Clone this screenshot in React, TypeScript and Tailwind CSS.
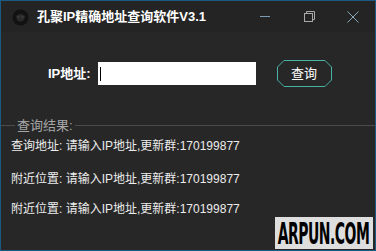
import React from "react";

const cjk = { fontFamily: '"Liberation Sans", "Noto Sans CJK SC", sans-serif' };

function AppIcon() {
  return (
    <svg width="17" height="17" viewBox="0 0 17 17">
      <circle cx="8.5" cy="8.5" r="8" fill="#121212" />
      <path d="M4 7 Q8.5 3 13 7 L12 11 Q8.5 14 5 11 Z" fill="#2a2a2a" />
      <circle cx="6.5" cy="8" r="1.2" fill="#3a3a3a" />
      <circle cx="10.5" cy="8" r="1.2" fill="#3a3a3a" />
    </svg>
  );
}

function QueryButton() {
  return (
    <button className="relative w-[55px] h-[27px] flex items-center justify-center text-[13px] text-white">
      <svg className="absolute inset-0" width="55" height="27" viewBox="0 0 55 27">
        <polygon
          points="7,0.5 48,0.5 54.5,7 54.5,20 48,26.5 7,26.5 0.5,20 0.5,7"
          fill="none"
          stroke="#49b3a5"
          strokeWidth="1"
        />
      </svg>
      <span className="relative">查询</span>
    </button>
  );
}

export default function App() {
  const lines = [
    "查询地址: 请输入IP地址,更新群:170199877",
    "附近位置: 请输入IP地址,更新群:170199877",
    "附近位置: 请输入IP地址,更新群:170199877",
  ];

  return (
    <div
      className="relative w-[376px] h-[251px] border border-[#1b5a82] bg-[#272727] flex flex-col overflow-hidden"
      style={cjk}
    >
      {/* title bar */}
      <div className="h-[31px] flex items-center bg-[#242424]">
        <div className="ml-[11px] mt-[1px]">
          <AppIcon />
        </div>
        <span className="ml-[8px] text-[13px] font-bold text-white">孔聚IP精确地址查询软件V3.1</span>
        <div className="ml-auto flex h-full">
          <div className="w-[44px] flex items-center justify-center">
            <div className="w-[10px] h-[1px] bg-[#7d9cb4]" />
          </div>
          <div className="w-[44px] flex items-center justify-center">
            <svg width="11" height="11" viewBox="0 0 11 11">
              <rect x="0.5" y="2.5" width="8" height="8" fill="none" stroke="#a9a9a9" />
              <path d="M2.5 2.5 V0.5 H10.5 V8.5 H8.5" fill="none" stroke="#a9a9a9" />
            </svg>
          </div>
          <div className="w-[44px] flex items-center justify-center">
            <svg width="12" height="12" viewBox="0 0 12 12">
              <path d="M0.5 0.5 L11.5 11.5 M11.5 0.5 L0.5 11.5" stroke="#86a7b4" strokeWidth="1" />
            </svg>
          </div>
        </div>
      </div>

      {/* query row */}
      <div className="mt-[28px] flex items-center pl-[47px]">
        <span className="text-[13px] font-bold text-white">IP地址:</span>
        <div className="ml-[7px] w-[158px] h-[23px] bg-white flex items-center pl-[2px]">
          <div className="w-[1px] h-[14px] bg-black" />
        </div>
        <div className="ml-[21px]">
          <QueryButton />
        </div>
      </div>

      {/* results */}
      <fieldset className="mt-[30px] border-t border-[#4b4b4b] min-w-0">
        <legend className="ml-[14px] px-[2px] text-[13px] leading-[17px] text-[#a6a6a6]">查询结果:</legend>
        <div className="pl-[10px] text-[12px] leading-[16px] text-[#ececec]">
          <div className="mt-[4px]">{lines[0]}</div>
          <div className="mt-[17px]">{lines[1]}</div>
          <div className="mt-[14px]">{lines[2]}</div>
        </div>
      </fieldset>

      {/* watermark */}
      <div className="absolute right-[2px] bottom-[1px] w-[98px] h-[32px] bg-[#dedede] flex items-center justify-center">
        <span
          className="inline-block shrink-0 -mx-[46px] scale-x-[0.5] text-[31px] font-bold leading-none text-black tracking-[-1px]"
          style={{ fontFamily: '"DejaVu Sans Condensed", "DejaVu Sans", sans-serif' }}
        >
          ARPUN.COM
        </span>
      </div>
    </div>
  );
}
